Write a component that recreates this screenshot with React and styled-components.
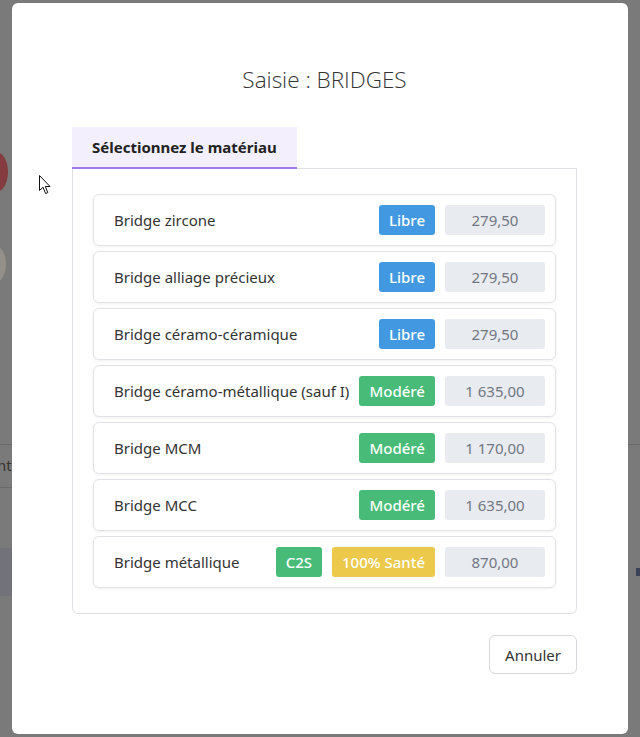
import React from 'react'
import styled, { createGlobalStyle } from 'styled-components'

const GlobalStyle = createGlobalStyle`
  * { box-sizing: border-box; }
  body {
    margin: 0;
    font-family: "Noto Sans", "Open Sans", sans-serif;
    background: #7a7a7a;
  }
`

const Page = styled.div`
  position: relative;
  width: 640px;
  height: 737px;
  padding: 3px 12px;
  background: #7a7a7a;
  overflow: hidden;
`

/* bits of the dimmed page under the modal */
const Behind = styled.div`
  position: absolute;
  left: ${p => p.$x}px;
  top: ${p => p.$y}px;
  width: ${p => p.$w}px;
  height: ${p => p.$h}px;
  background: ${p => p.$bg || 'transparent'};
  border-radius: ${p => p.$r || 0};
  border-top: ${p => (p.$line ? '1px solid #6a6a6a' : 'none')};
`

const BehindText = styled.span`
  position: absolute;
  left: -3px;
  top: 455px;
  font-size: 15px;
  color: #3a3530;
`

const Modal = styled.div`
  position: relative;
  display: flex;
  flex-direction: column;
  height: 731px;
  padding: 0 51px 0 60px;
  background: #fff;
  border-radius: 6px;
`

const Title = styled.h2`
  margin: 62px 0 32px;
  font-family: "Open Sans", "Noto Sans", sans-serif;
  font-size: 22.5px;
  font-weight: 300;
  line-height: 30px;
  color: #333;
  text-align: center;
`

const Tabs = styled.div`
  display: flex;
`

const Tab = styled.div`
  position: relative;
  z-index: 1;
  height: 42px;
  padding: 0 20px;
  display: flex;
  align-items: center;
  background: #f3effd;
  border-bottom: 2px solid #a07ae6;
  font-size: 15px;
  font-weight: 700;
  color: #222;
  margin-bottom: -1px;
`

const Panel = styled.div`
  display: flex;
  flex-direction: column;
  gap: 5px;
  padding: 25px 20px;
  border: 1px solid #e0e0e4;
  border-radius: 0 0 6px 6px;
`

const Row = styled.div`
  display: flex;
  align-items: center;
  gap: 10px;
  height: 52px;
  padding: 0 10px 0 20px;
  border: 1px solid #e2e2e6;
  border-radius: 6px;
  box-shadow: 0 1px 3px rgba(0, 0, 0, 0.06);
`

const Label = styled.span`
  flex: 1;
  font-size: 15px;
  color: #333;
  white-space: nowrap;
`

const badgeColors = {
  libre: '#4299e1',
  modere: '#48bb78',
  c2s: '#48bb78',
  sante: '#ecc94b',
}

const Badge = styled.span`
  height: 30px;
  padding: 0 10px;
  display: flex;
  align-items: center;
  border-radius: 3px;
  background: ${p => badgeColors[p.$kind]};
  color: #fff;
  font-size: 15px;
  font-weight: 500;
  white-space: nowrap;
`

const Price = styled.span`
  width: 100px;
  height: 30px;
  display: flex;
  align-items: center;
  justify-content: center;
  border-radius: 3px;
  background: #e8ebef;
  color: #717784;
  font-size: 15px;
`

const Footer = styled.div`
  display: flex;
  justify-content: flex-end;
  margin-top: 21px;
`

const Button = styled.button`
  height: 39px;
  padding: 0 15px;
  background: #fff;
  border: 1px solid #d8d8dc;
  border-radius: 6px;
  font-family: "Noto Sans", sans-serif;
  font-size: 15px;
  color: #333;
  cursor: pointer;
`

const Cursor = styled.svg`
  position: absolute;
  left: 39px;
  top: 175px;
`

const rows = [
  { label: 'Bridge zircone', badges: [['libre', 'Libre']], price: '279,50' },
  { label: 'Bridge alliage précieux', badges: [['libre', 'Libre']], price: '279,50' },
  { label: 'Bridge céramo-céramique', badges: [['libre', 'Libre']], price: '279,50' },
  { label: 'Bridge céramo-métallique (sauf I)', badges: [['modere', 'Modéré']], price: '1 635,00' },
  { label: 'Bridge MCM', badges: [['modere', 'Modéré']], price: '1 170,00' },
  { label: 'Bridge MCC', badges: [['modere', 'Modéré']], price: '1 635,00' },
  { label: 'Bridge métallique', badges: [['c2s', 'C2S'], ['sante', '100% Santé']], price: '870,00' },
]

const App = () => {
  return (
    <Page>
      <GlobalStyle />
      <Behind $x={-16} $y={152} $w={24} $h={40} $bg="#843c3e" $r="50%" />
      <Behind $x={-18} $y={245} $w={24} $h={38} $bg="#949089" $r="50%" />
      <Behind $x={0} $y={444} $w={12} $h={44} $line />
      <Behind $x={0} $y={487} $w={12} $h={1} $line />
      <Behind $x={0} $y={548} $w={12} $h={48} $bg="#72737a" />
      <Behind $x={628} $y={444} $w={12} $h={1} $line />
      <Behind $x={636} $y={568} $w={4} $h={8} $bg="#3b4456" />
      <BehindText>nt</BehindText>

      <Modal>
        <Title>Saisie : BRIDGES</Title>
        <Tabs>
          <Tab>Sélectionnez le matériau</Tab>
        </Tabs>
        <Panel>
          {rows.map(r => (
            <Row key={r.label}>
              <Label>{r.label}</Label>
              {r.badges.map(([kind, text]) => (
                <Badge key={kind} $kind={kind}>{text}</Badge>
              ))}
              <Price>{r.price}</Price>
            </Row>
          ))}
        </Panel>
        <Footer>
          <Button type="button">Annuler</Button>
        </Footer>
      </Modal>

      <Cursor width="13" height="20" viewBox="0 0 13 20">
        <path d="M0.5 0.5 L0.5 15.5 L4 12.2 L6.6 18.5 L8.8 17.6 L6.3 11.5 L11 11.5 Z" fill="#fff" stroke="#111" strokeWidth="1" strokeLinejoin="round" />
      </Cursor>
    </Page>
  )
}

export default App
